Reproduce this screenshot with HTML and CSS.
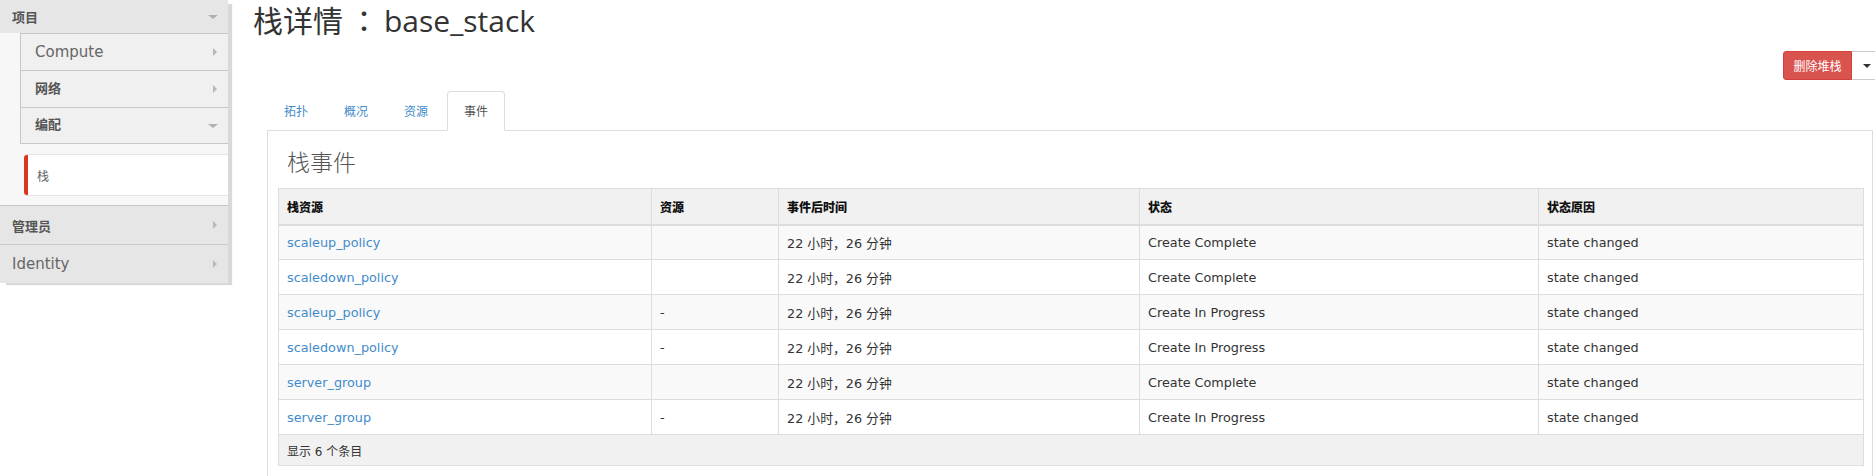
FILE: index.html
```html
<!DOCTYPE html>
<html lang="zh-CN">
<head>
<meta charset="utf-8">
<title>栈详情</title>
<link rel="stylesheet" href="styles.css">
</head>
<body>
<div class="page">
  <nav class="sidebar">
    <div class="nav-head"><span class="head-label">项目</span><span class="caret-down"></span></div>
    <div class="sub-area">
      <div class="submenu">
        <div class="sub-row"><span class="sub-label latin">Compute</span><span class="caret-right"></span></div>
        <div class="sub-row"><span class="sub-label bold">网络</span><span class="caret-right"></span></div>
        <div class="sub-row"><span class="sub-label bold">编配</span><span class="caret-down"></span></div>
      </div>
      <div class="leaf-list">
        <div class="leaf active">栈</div>
      </div>
    </div>
    <div class="nav-head bordered"><span class="head-label">管理员</span><span class="caret-right"></span></div>
    <div class="nav-head bordered"><span class="head-label latin">Identity</span><span class="caret-right"></span></div>
  </nav>

  <main class="main">
    <h1 class="page-title">栈详情<span class="colon">：</span>base_stack</h1>
    <div class="actions">
      <div class="btn-group">
        <button class="btn btn-danger">删除堆栈</button>
        <button class="btn btn-toggle"><span class="caret"></span></button>
      </div>
    </div>
    <div class="tabs-wrap">
      <ul class="nav-tabs">
        <li><a href="#">拓扑</a></li>
        <li><a href="#">概况</a></li>
        <li><a href="#">资源</a></li>
        <li class="active"><a href="#">事件</a></li>
      </ul>
      <div class="tab-content">
        <h3 class="section-title">栈事件</h3>
        <table class="events">
          <thead>
            <tr>
              <th class="c1">栈资源</th>
              <th class="c2">资源</th>
              <th class="c3">事件后时间</th>
              <th class="c4">状态</th>
              <th class="c5">状态原因</th>
            </tr>
          </thead>
          <tbody>
            <tr><td><a href="#">scaleup_policy</a></td><td></td><td>22 小时，26 分钟</td><td>Create Complete</td><td>state changed</td></tr>
            <tr><td><a href="#">scaledown_policy</a></td><td></td><td>22 小时，26 分钟</td><td>Create Complete</td><td>state changed</td></tr>
            <tr><td><a href="#">scaleup_policy</a></td><td>-</td><td>22 小时，26 分钟</td><td>Create In Progress</td><td>state changed</td></tr>
            <tr><td><a href="#">scaledown_policy</a></td><td>-</td><td>22 小时，26 分钟</td><td>Create In Progress</td><td>state changed</td></tr>
            <tr><td><a href="#">server_group</a></td><td></td><td>22 小时，26 分钟</td><td>Create Complete</td><td>state changed</td></tr>
            <tr><td><a href="#">server_group</a></td><td>-</td><td>22 小时，26 分钟</td><td>Create In Progress</td><td>state changed</td></tr>
          </tbody>
          <tfoot>
            <tr><td colspan="5">显示 6 个条目</td></tr>
          </tfoot>
        </table>
      </div>
    </div>
  </main>
</div>
</body>
</html>
```

FILE: styles.css
```css
* { box-sizing: border-box; }
html, body { margin: 0; padding: 0; }
body {
  background: #fff;
  font-family: "DejaVu Sans", "Noto Sans CJK SC", sans-serif;
  color: #333;
  overflow: hidden;
  width: 1875px;
  height: 476px;
}
.page {
  display: flex;
  align-items: flex-start;
}

/* Sidebar */
.sidebar {
  width: 228px;
  flex: 0 0 228px;
  background: #f7f7f7;
  box-shadow: 5px 3px 1px -1px #d9d9d9;
}
.nav-head {
  height: 33px;
  display: flex;
  align-items: center;
  justify-content: space-between;
  padding: 0 10px 0 12px;
  background: #e6e6e6;
}
.nav-head.bordered {
  height: 39px;
  border-top: 1px solid #c8c8c8;
}
.head-label {
  font-family: "Noto Sans CJK SC", "DejaVu Sans", sans-serif;
  font-weight: bold;
  font-size: 13px;
  color: #555;
}
.head-label.latin, .sub-label.latin {
  font-family: "DejaVu Sans", sans-serif;
  font-weight: normal;
  font-size: 15px;
  color: #666;
}
.caret-down {
  width: 0; height: 0;
  border-left: 5px solid transparent;
  border-right: 5px solid transparent;
  border-top: 4px solid #b0b0b0;
}
.caret-right {
  width: 0; height: 0;
  border-top: 4px solid transparent;
  border-bottom: 4px solid transparent;
  border-left: 4px solid #b8b8b8;
  margin-right: 1px;
}
.sub-area {
  padding: 0 0 10px 20px;
}
.submenu {
  border-left: 1px solid #c8c8c8;
}
.sub-row {
  height: 37px;
  display: flex;
  align-items: center;
  justify-content: space-between;
  padding: 0 10px 0 14px;
  background: #f0f0f0;
  border-top: 1px solid #c8c8c8;
}
.sub-row:last-child {
  border-bottom: 1px solid #c8c8c8;
}
.sub-label.bold {
  font-family: "Noto Sans CJK SC", sans-serif;
  font-weight: bold;
  font-size: 13px;
  line-height: 16px;
  padding-bottom: 3px;
  color: #555;
}
.leaf-list {
  padding: 11px 0 0 4px;
}
.leaf {
  height: 40px;
  display: flex;
  align-items: center;
  padding-left: 9px;
  font-family: "Noto Sans CJK SC", sans-serif;
  font-size: 12px;
  color: #666;
  background: #fff;
}
.leaf.active {
  border-left: 4px solid #d9381e;
  border-radius: 3px 0 0 3px;
  box-shadow: 0 -1px 0 #e4e4e4, 0 1px 0 #e4e4e4;
}

/* Main */
.main {
  flex: 1;
  padding-left: 25px;
  min-width: 0;
}
.page-title {
  margin: 0;
  padding-top: 1px;
  height: 41px;
  font-family: "Open Sans", "Noto Sans CJK SC", sans-serif;
  font-weight: normal;
  font-size: 30px;
  line-height: 40px;
  color: #333;
  white-space: nowrap;
}
.colon {
  display: inline-block;
  line-height: 1;
  font-family: "Noto Sans CJK TC", "Noto Sans CJK SC", sans-serif;
  margin: 0 5px 0 6px;
}
.actions {
  display: flex;
  justify-content: flex-end;
  margin-top: 10px;
  margin-right: -4px;
}
.btn-group { display: flex; }
.btn {
  font-family: "Noto Sans CJK SC", sans-serif;
  font-size: 12px;
  height: 29px;
  margin: 0;
  border: 1px solid;
  cursor: pointer;
}
.btn-danger {
  width: 69px;
  background: #d9534f;
  border-color: #d43f3a;
  color: #fff;
  border-radius: 3px 0 0 3px;
  padding: 0;
}
.btn-toggle {
  width: 27px;
  background: #fff;
  border-color: #ccc;
  border-left: 0;
  border-radius: 0 3px 3px 0;
  display: flex;
  align-items: center;
  justify-content: center;
  padding: 0 0 0 4px;
}
.caret {
  width: 0; height: 0;
  border-left: 4px solid transparent;
  border-right: 4px solid transparent;
  border-top: 4px solid #333;
}
.tabs-wrap {
  margin-top: 11px;
  margin-left: 14px;
  margin-right: 2px;
}
.nav-tabs {
  list-style: none;
  margin: 0;
  padding: 0;
  display: flex;
}
.nav-tabs li { margin-bottom: -1px; }
.nav-tabs a {
  display: block;
  margin-right: 2px;
  padding: 10px 16px;
  line-height: 18px;
  border: 1px solid transparent;
  border-radius: 4px 4px 0 0;
  font-family: "Noto Sans CJK SC", sans-serif;
  font-size: 12px;
  color: #428bca;
  text-decoration: none;
}
.nav-tabs li.active a {
  background: #fff;
  color: #555;
  border-color: #ddd #ddd transparent;
}
.tab-content {
  border: 1px solid #ddd;
  padding: 17px 8px 40px 10px;
}
.section-title {
  margin: 0 0 14px;
  font-family: "Noto Sans CJK SC", sans-serif;
  font-weight: 300;
  font-size: 23px;
  line-height: 26px;
  color: #555;
  padding-left: 9px;
}
.events {
  width: 100%;
  border-collapse: collapse;
  border: 1px solid #ddd;
  font-size: 12.8px;
  table-layout: fixed;
}
.events th, .events td {
  border: 1px solid #ddd;
  padding: 0 8px;
  height: 35px;
  text-align: left;
  vertical-align: middle;
  font-weight: normal;
}
.events th {
  height: 36px;
  background: #f1f1f1;
  border-bottom: 2px solid #ddd;
  font-family: "Noto Sans CJK SC", sans-serif;
  font-weight: 900;
  font-size: 12px;
  color: #111;
}
.events .c1 { width: 373px; }
.events .c2 { width: 127px; }
.events .c3 { width: 361px; }
.events .c4 { width: 399px; }
.events .c5 { width: auto; }
.events tbody tr:nth-child(odd) td { background: #f9f9f9; }
.events tbody tr:nth-child(even) td { background: #fff; }
.events a {
  color: #428bca;
  text-decoration: none;
}
.events tfoot td {
  height: 31px;
  background: #f1f1f1;
  font-size: 12px;
  font-family: "DejaVu Sans", "Noto Sans CJK SC", sans-serif;
}
```
